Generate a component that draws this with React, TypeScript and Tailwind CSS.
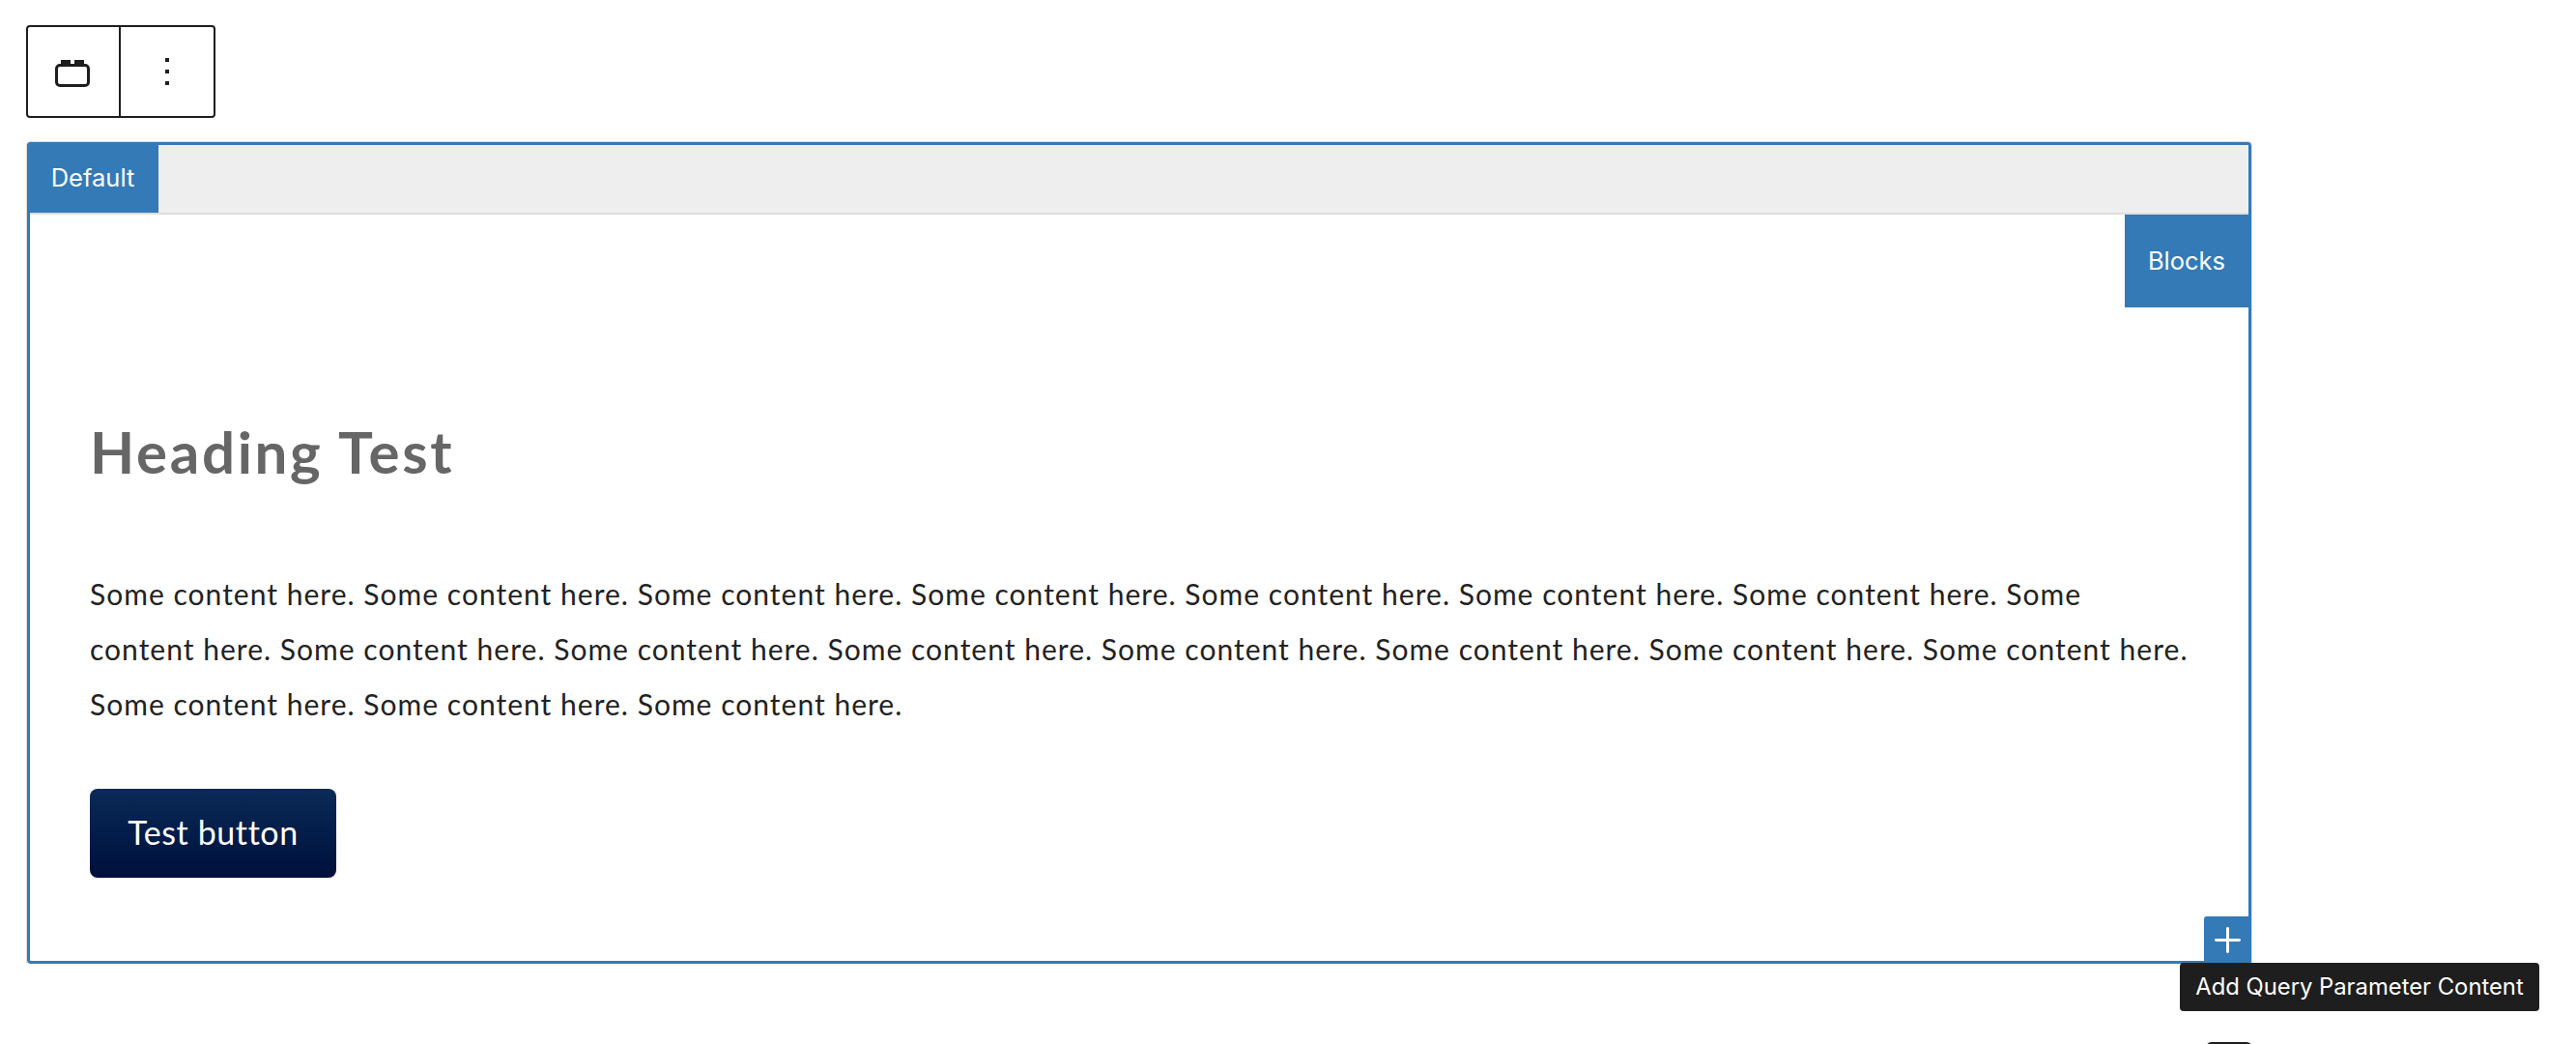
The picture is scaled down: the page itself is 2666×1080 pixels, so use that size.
import { Plus } from 'lucide-react';

const bodyFont = "font-['Lato','Open_Sans',sans-serif]";
const uiFont = "font-['Inter',sans-serif]";

function BlockIcon() {
    return (
        <svg width="36" height="28" viewBox="0 0 36 28" fill="none">
            <rect x="6" y="0" width="10" height="6" fill="#1e1e1e" />
            <rect x="20" y="0" width="10" height="6" fill="#1e1e1e" />
            <rect x="1.5" y="5.5" width="33" height="21" rx="3.5" stroke="#1e1e1e" strokeWidth="3" fill="#fff" />
        </svg>
    );
}

function Toolbar() {
    return (
        <div className="flex h-[96px] w-[196px] rounded-[4px] border-2 border-[#1e1e1e] bg-white">
            <div className="flex w-[96px] items-center justify-center border-r-2 border-[#1e1e1e] pr-[2px] pt-[4px]">
                <BlockIcon />
            </div>
            <div className="flex flex-1 flex-col items-center justify-center gap-[8px]">
                <span className="h-[4px] w-[4px] bg-[#1e1e1e]" />
                <span className="h-[4px] w-[4px] bg-[#1e1e1e]" />
                <span className="h-[4px] w-[4px] bg-[#1e1e1e]" />
            </div>
        </div>
    );
}

export default function App() {
    return (
        <div className="h-[1080px] w-[2666px] overflow-hidden bg-white pl-[27px] pt-[26px]">
            <Toolbar />

            <div className="mt-[24px] h-[851px] w-[2304px] rounded-t-[5px] border-x border-t border-[#dddddd]">
                <div className="relative h-[850px] w-[2302px] rounded-[4px] border-[3px] border-[#337ab7] bg-white">
                    {/* Tabs */}
                    <div className="flex h-[72px] border-b-2 border-[#dddddd] bg-[#eeeeee]">
                        <div className={`-ml-[3px] -mt-[3px] flex h-[73px] w-[136px] items-center justify-center rounded-tl-[4px] bg-[#337ab7] pt-[2px] text-[25.5px] text-white ${uiFont}`}>
                            Default
                        </div>
                    </div>

                    <div className="flex justify-end">
                        <div className={`flex h-[96px] w-[128px] items-center justify-center bg-[#337ab7] text-[25.5px] text-white ${uiFont}`}>
                            Blocks
                        </div>
                    </div>

                    {/* Content */}
                    <div className={`pl-[62px] ${bodyFont}`}>
                        <h2 className="mt-[113px] text-[60px] font-bold leading-[72px] tracking-[2.7px] text-[#666666]">Heading Test</h2>
                        <p className="mt-[83px] whitespace-nowrap text-[30px] leading-[57px] tracking-[1.02px] text-[#222222]">
                            Some content here. Some content here. Some content here. Some content here. Some content here. Some content here. Some content here. Some
                            <br />
                            content here. Some content here. Some content here. Some content here. Some content here. Some content here. Some content here. Some content here.
                            <br />
                            Some content here. Some content here. Some content here.
                        </p>
                        <div className="mt-[59px] flex h-[92px] w-[255px] items-center justify-center rounded-[8px] bg-gradient-to-b from-[#0c2a57] to-[#000f3c] pb-[3px] text-[34px] tracking-[0.6px] text-white">
                            Test button
                        </div>
                    </div>

                    <div className="absolute bottom-[-3px] right-[-3px] flex h-[49px] w-[49px] items-center justify-center rounded-[3px] bg-[#337ab7]">
                        <Plus size={41} strokeWidth={1.75} className="text-white" />
                    </div>

                    {/* Tooltip */}
                    <div className={`absolute left-[2225px] top-[846px] flex h-[50px] w-[372px] items-center justify-center rounded-[4px] bg-[#1e1e1e] text-[23.8px] text-white ${uiFont}`}>
                        <span className="whitespace-nowrap">Add Query Parameter Content</span>
                    </div>

                    <div className="absolute left-[2252px] top-[928px] h-[6px] w-[48px] rounded-t-[6px] bg-[#1e1e1e]" />
                </div>
            </div>
        </div>
    );
}
